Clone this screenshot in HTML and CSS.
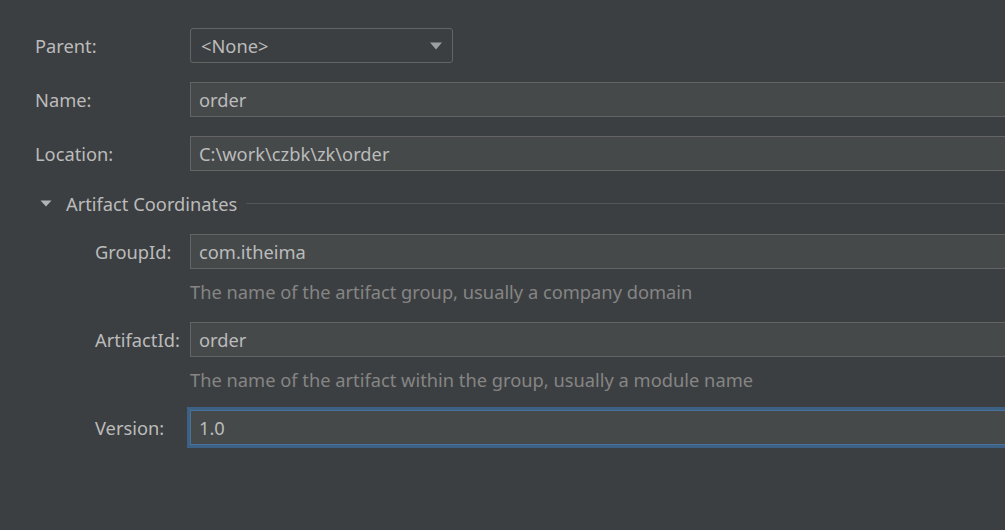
FILE: index.html
```html
<!DOCTYPE html>
<html>
<head>
<meta charset="utf-8">
<link rel="stylesheet" href="styles.css">
</head>
<body>
<div class="form">
  <div class="row">
    <div class="label">Parent:</div>
    <div class="combo">
      <span class="value">&lt;None&gt;</span>
      <svg class="arrow" width="14" height="8" viewBox="0 0 14 8"><polygon points="1,0.5 13,0.5 7,7.5" fill="#9da0a3"/></svg>
    </div>
  </div>
  <div class="row">
    <div class="label">Name:</div>
    <div class="field">order</div>
  </div>
  <div class="row">
    <div class="label">Location:</div>
    <div class="field">C:\work\czbk\zk\order</div>
  </div>
  <div class="section">
    <svg class="toggle" width="12" height="7" viewBox="0 0 12 7"><polygon points="0.5,0.5 11.5,0.5 6,6.5" fill="#b0b3b6"/></svg>
    <span class="section-title">Artifact Coordinates</span>
    <span class="section-line"></span>
  </div>
  <div class="sub">
    <div class="row">
      <div class="label sub-label">GroupId:</div>
      <div class="field">com.itheima</div>
    </div>
    <div class="help">The name of the artifact group, usually a company domain</div>
    <div class="row">
      <div class="label sub-label">ArtifactId:</div>
      <div class="field">order</div>
    </div>
    <div class="help">The name of the artifact within the group, usually a module name</div>
    <div class="row">
      <div class="label sub-label">Version:</div>
      <div class="field focused">1.0</div>
    </div>
  </div>
</div>
</body>
</html>
```
FILE: styles.css
```css
html, body {
  margin: 0;
  padding: 0;
  background: #3c3f41;
  overflow: hidden;
  width: 1005px;
  height: 530px;
}
body {
  font-family: "Noto Sans", "Open Sans", sans-serif;
  font-size: 18.3px;
  color: #bbbbbb;
}
.form {
  padding: 28px 0 0 35px;
  display: flex;
  flex-direction: column;
}
.row {
  display: flex;
  align-items: center;
  height: 35px;
  margin-bottom: 19px;
}
.label {
  width: 155px;
  flex: none;
  white-space: nowrap;
}
.combo {
  box-sizing: border-box;
  width: 263px;
  height: 35px;
  border: 1px solid #646464;
  border-radius: 3px;
  display: flex;
  align-items: center;
  justify-content: space-between;
  padding: 0 9px 0 10px;
}
.arrow { display: block; }
.field {
  box-sizing: border-box;
  width: 840px;
  flex: none;
  height: 35px;
  border: 1px solid #646464;
  background: #45494a;
  display: flex;
  align-items: center;
  padding-left: 8px;
  white-space: nowrap;
}
.field.focused {
  border-color: #4a7199;
  box-shadow: 0 0 0 3px #3d6185;
}
.section {
  display: flex;
  align-items: center;
  height: 24px;
  margin-top: 1px;
  margin-bottom: 19px;
  padding-left: 5px;
}
.toggle { display: block; margin-right: 14px; }
.section-title { white-space: nowrap; }
.section-line {
  flex: 1;
  height: 1px;
  background: #535659;
  margin-left: 9px;
}
.sub {
  padding-left: 60px;
  display: flex;
  flex-direction: column;
}
.sub-label { width: 95px; }
.help {
  color: #858585;
  height: 24px;
  line-height: 24px;
  margin: -8px 0 18px 95px;
  white-space: nowrap;
}
```
